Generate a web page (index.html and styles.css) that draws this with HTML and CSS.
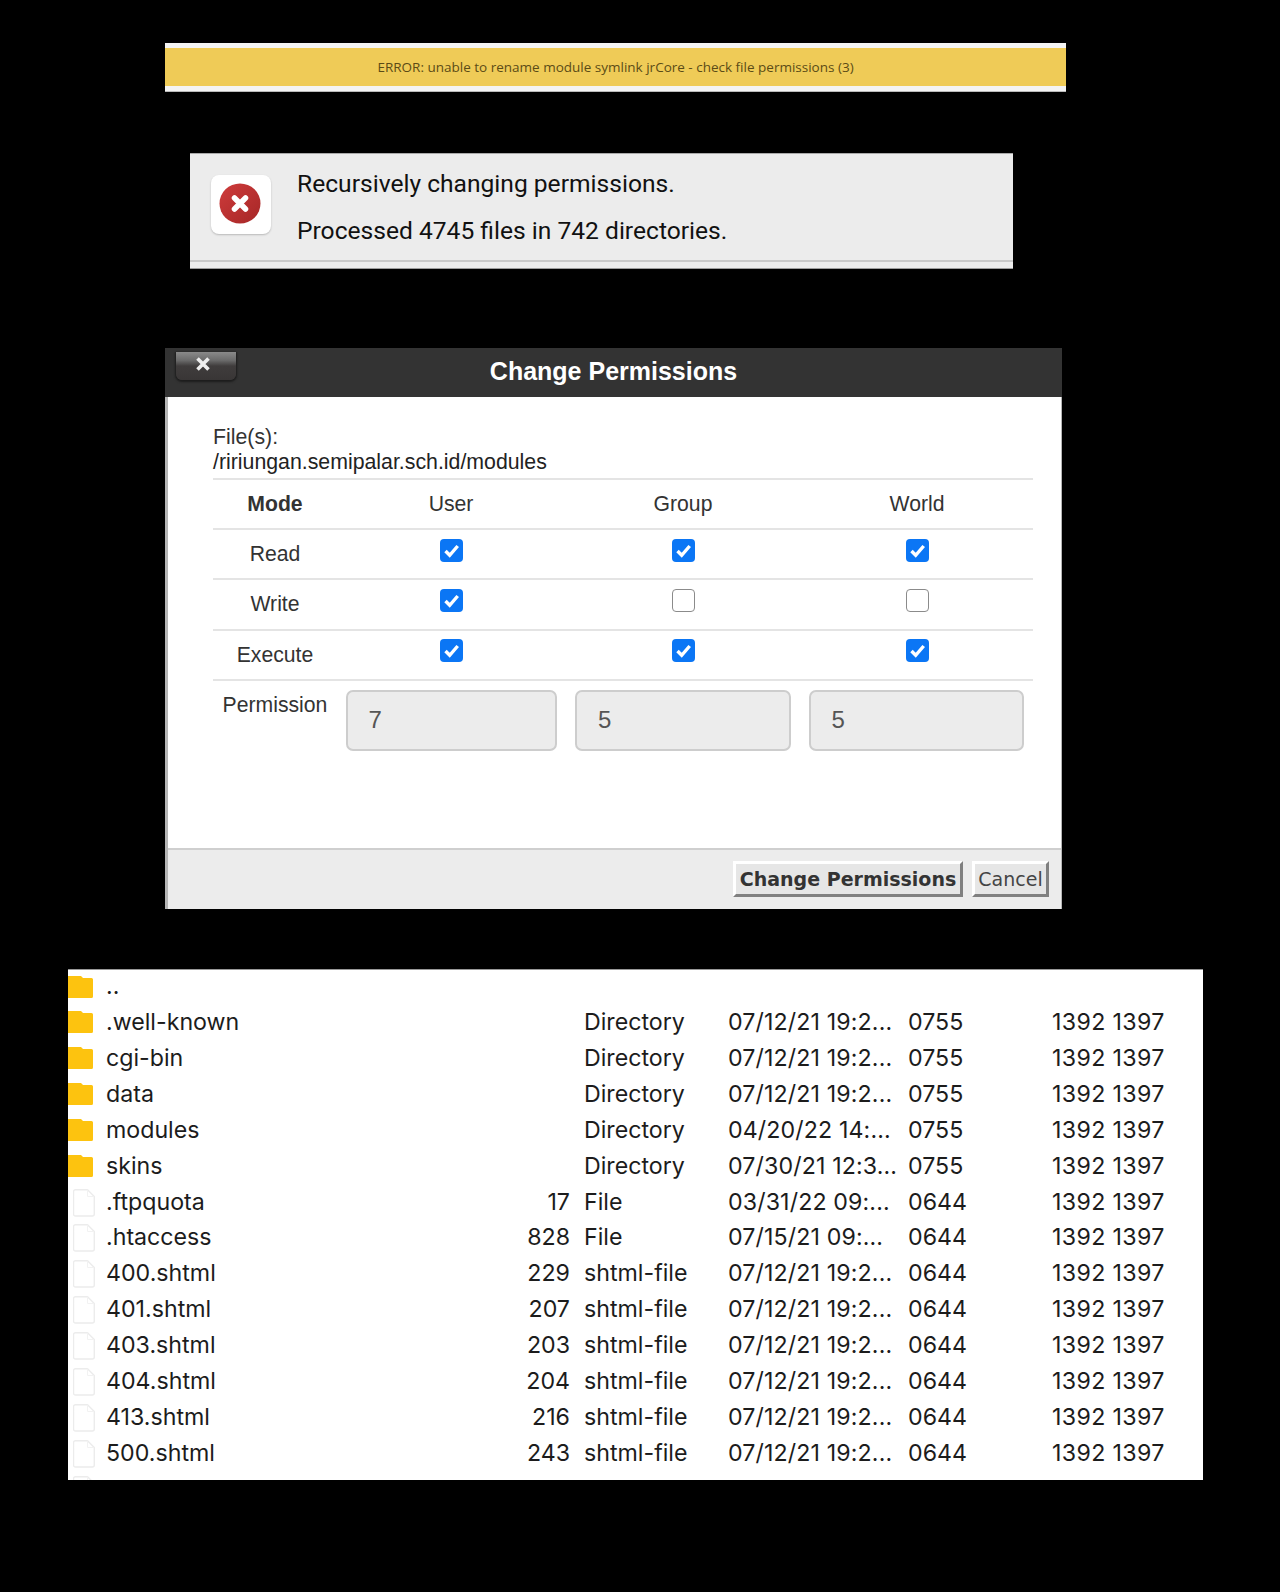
FILE: index.html
```html
<!DOCTYPE html>
<html lang="en">
<head>
<meta charset="utf-8">
<title>Permissions</title>
<link rel="stylesheet" href="styles.css">
</head>
<body>
<svg class="defs" width="0" height="0" aria-hidden="true">
  <defs>
    <linearGradient id="redball" x1="0" y1="0" x2="1" y2="1"><stop offset="0" stop-color="#cf3b3b"/><stop offset="1" stop-color="#a52727"/></linearGradient>
  </defs>
  <symbol id="folder" viewBox="0 0 25 22"><path d="M0 0h13l2 2h8.500a1.500 1.500 0 0 1 1.500 1.500v17a1.500 1.500 0 0 1-1.500 1.500H0z" fill="#fdc30f"/></symbol>
  <symbol id="file" viewBox="0 0 22 28"><path d="M2.500 .7h12l6.800 6.800v17.500a2 2 0 0 1-2 2H2.500a2 2 0 0 1-2-2V2.700a2 2 0 0 1 2-2z" fill="#fff" stroke="#ececec" stroke-width="1.400"/><path d="M14.500 .7v6.800h6.800" fill="none" stroke="#f2f2f2"/></symbol>
  <symbol id="check" viewBox="0 0 23 23"><rect width="23" height="23" rx="4" fill="#0b76f5"/><path d="M5.500 12l4.200 4.300 8-9.300" fill="none" stroke="#fff" stroke-width="3.400"/></symbol>
</svg>

<div class="banner"><p class="banner-text">ERROR: unable to rename module symlink jrCore - check file permissions (3)</p></div>

<div class="notice">
  <div class="notice-body">
    <div class="notice-icon">
      <svg width="42" height="41" viewBox="0 0 42 41"><ellipse cx="21" cy="20.500" rx="20.500" ry="20" fill="url(#redball)"/><path d="M15.500 15l11 11M26.500 15l-11 11" stroke="#fff" stroke-width="5.500" stroke-linecap="round"/></svg>
    </div>
    <div class="notice-text">
      <p>Recursively changing permissions.</p>
      <p>Processed 4745 files in 742 directories.</p>
    </div>
  </div>
</div>

<section class="dialog">
  <header class="dialog-head">
    <button class="close-btn" type="button"><svg width="16" height="14" viewBox="0 0 16 14"><path d="M2.500 1.500l11 11M13.500 1.500l-11 11" stroke="#eee" stroke-width="3.600"/></svg></button>
    <h2 class="dialog-title">Change Permissions</h2>
  </header>
  <div class="dialog-body">
    <div class="files">
      <div class="files-label">File(s):</div>
      <div class="files-path">/ririungan.semipalar.sch.id/modules</div>
    </div>
    <div class="perm-row">
      <div class="cell cell-label"><b>Mode</b></div><div class="cell">User</div><div class="cell">Group</div><div class="cell">World</div>
    </div>
    <div class="perm-row">
      <div class="cell cell-label">Read</div>
      <div class="cell"><svg class="cb"><use href="#check"/></svg></div>
      <div class="cell"><svg class="cb"><use href="#check"/></svg></div>
      <div class="cell"><svg class="cb"><use href="#check"/></svg></div>
    </div>
    <div class="perm-row">
      <div class="cell cell-label">Write</div>
      <div class="cell"><svg class="cb"><use href="#check"/></svg></div>
      <div class="cell"><span class="cb cb-off"></span></div>
      <div class="cell"><span class="cb cb-off"></span></div>
    </div>
    <div class="perm-row">
      <div class="cell cell-label">Execute</div>
      <div class="cell"><svg class="cb"><use href="#check"/></svg></div>
      <div class="cell"><svg class="cb"><use href="#check"/></svg></div>
      <div class="cell"><svg class="cb"><use href="#check"/></svg></div>
    </div>
    <div class="perm-row perm-inputs">
      <div class="cell cell-label cell-top">Permission</div>
      <div class="field field-a">7</div>
      <div class="field field-b">5</div>
      <div class="field field-c">5</div>
    </div>
  </div>
  <footer class="dialog-foot">
    <button class="btn btn-strong" type="button">Change Permissions</button>
    <button class="btn btn-plain" type="button">Cancel</button>
  </footer>
</section>

<section class="list">
  <div class="row"><svg class="ico-folder"><use href="#folder"/></svg><span class="name">..</span></div>
  <div class="row"><svg class="ico-folder"><use href="#folder"/></svg><span class="name">.well-known</span><span class="size"></span><span class="type">Directory</span><span class="date">07/12/21 19:2...</span><span class="mode">0755</span><span class="owner">1392 1397</span></div>
  <div class="row"><svg class="ico-folder"><use href="#folder"/></svg><span class="name">cgi-bin</span><span class="size"></span><span class="type">Directory</span><span class="date">07/12/21 19:2...</span><span class="mode">0755</span><span class="owner">1392 1397</span></div>
  <div class="row"><svg class="ico-folder"><use href="#folder"/></svg><span class="name">data</span><span class="size"></span><span class="type">Directory</span><span class="date">07/12/21 19:2...</span><span class="mode">0755</span><span class="owner">1392 1397</span></div>
  <div class="row"><svg class="ico-folder"><use href="#folder"/></svg><span class="name">modules</span><span class="size"></span><span class="type">Directory</span><span class="date">04/20/22 14:...</span><span class="mode">0755</span><span class="owner">1392 1397</span></div>
  <div class="row"><svg class="ico-folder"><use href="#folder"/></svg><span class="name">skins</span><span class="size"></span><span class="type">Directory</span><span class="date">07/30/21 12:3...</span><span class="mode">0755</span><span class="owner">1392 1397</span></div>
  <div class="row"><svg class="ico-file"><use href="#file"/></svg><span class="name">.ftpquota</span><span class="size">17</span><span class="type">File</span><span class="date">03/31/22 09:...</span><span class="mode">0644</span><span class="owner">1392 1397</span></div>
  <div class="row"><svg class="ico-file"><use href="#file"/></svg><span class="name">.htaccess</span><span class="size">828</span><span class="type">File</span><span class="date">07/15/21 09:...</span><span class="mode">0644</span><span class="owner">1392 1397</span></div>
  <div class="row"><svg class="ico-file"><use href="#file"/></svg><span class="name">400.shtml</span><span class="size">229</span><span class="type">shtml-file</span><span class="date">07/12/21 19:2...</span><span class="mode">0644</span><span class="owner">1392 1397</span></div>
  <div class="row"><svg class="ico-file"><use href="#file"/></svg><span class="name">401.shtml</span><span class="size">207</span><span class="type">shtml-file</span><span class="date">07/12/21 19:2...</span><span class="mode">0644</span><span class="owner">1392 1397</span></div>
  <div class="row"><svg class="ico-file"><use href="#file"/></svg><span class="name">403.shtml</span><span class="size">203</span><span class="type">shtml-file</span><span class="date">07/12/21 19:2...</span><span class="mode">0644</span><span class="owner">1392 1397</span></div>
  <div class="row"><svg class="ico-file"><use href="#file"/></svg><span class="name">404.shtml</span><span class="size">204</span><span class="type">shtml-file</span><span class="date">07/12/21 19:2...</span><span class="mode">0644</span><span class="owner">1392 1397</span></div>
  <div class="row"><svg class="ico-file"><use href="#file"/></svg><span class="name">413.shtml</span><span class="size">216</span><span class="type">shtml-file</span><span class="date">07/12/21 19:2...</span><span class="mode">0644</span><span class="owner">1392 1397</span></div>
  <div class="row"><svg class="ico-file"><use href="#file"/></svg><span class="name">500.shtml</span><span class="size">243</span><span class="type">shtml-file</span><span class="date">07/12/21 19:2...</span><span class="mode">0644</span><span class="owner">1392 1397</span></div>
  <div class="row"><svg class="ico-file"><use href="#file"/></svg></div>
</section>
</body>
</html>
```
FILE: styles.css
```css
* { box-sizing: border-box; }
html, body { margin: 0; padding: 0; background: #000; }
body { height: 1592px; overflow: hidden; padding-top: 43px; }
.defs { position: absolute; }
p { margin: 0; }

.banner {
  margin-left: 165px; width: 901px; height: 49px;
  padding: 5px 0 5px;
  background: #f4f4f4;
  border-bottom: 1px solid #b9b9b9;
}
.banner-text {
  height: 38px; text-align: center;
  background: #efcb57;
  font: 13.500px/39px "Open Sans", sans-serif;
  color: #5b4b16;
}

.notice {
  margin: 61px 0 0 190px; width: 823px; height: 116px;
  background: #ececec;
  border-top: 1px solid #a9a9a9;
  border-bottom: 1px solid #9c9c9c;
}
.notice-body {
  height: 108px; display: flex; padding: 21px 0 0 21px;
  border-bottom: 2px solid #c9c9c9;
}
.notice-icon {
  width: 60px; height: 59px; border-radius: 8px; background: #fff;
  box-shadow: 0 1px 2px rgba(0,0,0,.22);
  display: flex; align-items: center; justify-content: center;
  padding: 0 3px 3px 0;
}
.notice-text {
  margin: -15px 0 0 26px;
  font: 24.600px/47px "Roboto", sans-serif; color: #111;
}

.dialog {
  margin: 79px 0 0 165px; width: 897px; height: 561px;
  display: flex; flex-direction: column;
  background: #fff;
  border-left: 3px solid #b5b5b5; border-right: 1px solid #b5b5b5;
  font-family: "Liberation Sans", Arial, sans-serif; color: #333;
}
.dialog-head {
  position: relative; height: 49px; margin: 0 -1px 0 -3px;
  background: #333;
}
.dialog-title {
  margin: 0; padding-top: 9px; text-align: center;
  font: bold 25px/29px "Liberation Sans", Arial, sans-serif; color: #fff;
}
.close-btn {
  position: absolute; left: 11px; top: 4px; width: 60px; height: 28px;
  padding: 0 6px 2px 0; border: 0; border-radius: 0 0 6px 6px;
  background: linear-gradient(#8a8a8a 0, #6a6a6a 30%, #3f3c3c 50%, #393636 100%);
  box-shadow: 0 1px 2px 1px #1d1d1d;
}
.dialog-body { flex: 1; padding: 28px 0 0 45px; }
.files { width: 820px; height: 55px; font-size: 21.300px; line-height: 25px; border-bottom: 2px solid #e4e4e4; }
.files-path { color: #222; }
.perm-row {
  display: grid; grid-template-columns: 124px 228px 236px 232px;
  width: 820px; height: 50.200px;
  font-size: 21.200px; border-bottom: 2px solid #e4e4e4;
}
.cell { display: flex; align-items: center; justify-content: center; }
.perm-inputs { border-bottom: 0; height: 80px; padding-top: 9px; }
.cell-top { align-items: flex-start; padding-top: 3px; }
.cb { display: block; width: 23px; height: 23px; margin-top: -8px; }
.cb-off { background: #fff; border: 1.500px solid #8b8b8b; border-radius: 4px; }
.field {
  height: 61px; justify-self: center;
  background: #ececec; border: 2px solid #cdcdcd; border-radius: 7px;
  font-size: 24px; line-height: 55px; padding-left: 21px; color: #555;
}
.field-a { width: 211px; }
.field-b { width: 216px; }
.field-c { width: 215px; margin-right: 2px; }

.dialog-foot {
  height: 61px; background: #ececec; border-top: 2px solid #cfcfcf;
  display: flex; justify-content: flex-end; gap: 9px; padding: 11px 12px 0 0;
}
.btn {
  height: 36px; padding: 0; margin: 0; white-space: nowrap; text-align: center;
  background: #e6e6e6; color: #444;
  border: 3px solid; border-color: #fff #808080 #808080 #fff;
  font: 19px/26px "DejaVu Sans", Verdana, sans-serif;
}
.btn-plain { width: 77px; }
.btn-strong { font-weight: bold; color: #333; width: 230px; }

.list {
  margin: 60px 0 0 68px; width: 1135px; height: 511px; overflow: hidden;
  background: #fff; border-top: 1px solid #999;
  font: 23.200px/36px "Inter", sans-serif; color: #1c1c1c;
}
.row {
  display: grid; height: 35.930px; align-items: center;
  grid-template-columns: 38px 416px 48px 14px 144px 180px 144px 143px;
}
.row:first-child { margin-top: -2px; }
.ico-folder { width: 25px; height: 22px; display: block; margin-top: 1px; }
.ico-file { width: 22px; height: 28px; display: block; margin: 2px 0 0 5px; }
.size { text-align: right; grid-column: 3; }
.name { grid-column: 2; }
.type { grid-column: 5; }
.date { grid-column: 6; letter-spacing: .12px; }
.mode { grid-column: 7; }
.owner { grid-column: 8; white-space: nowrap; letter-spacing: .35px; }
```
